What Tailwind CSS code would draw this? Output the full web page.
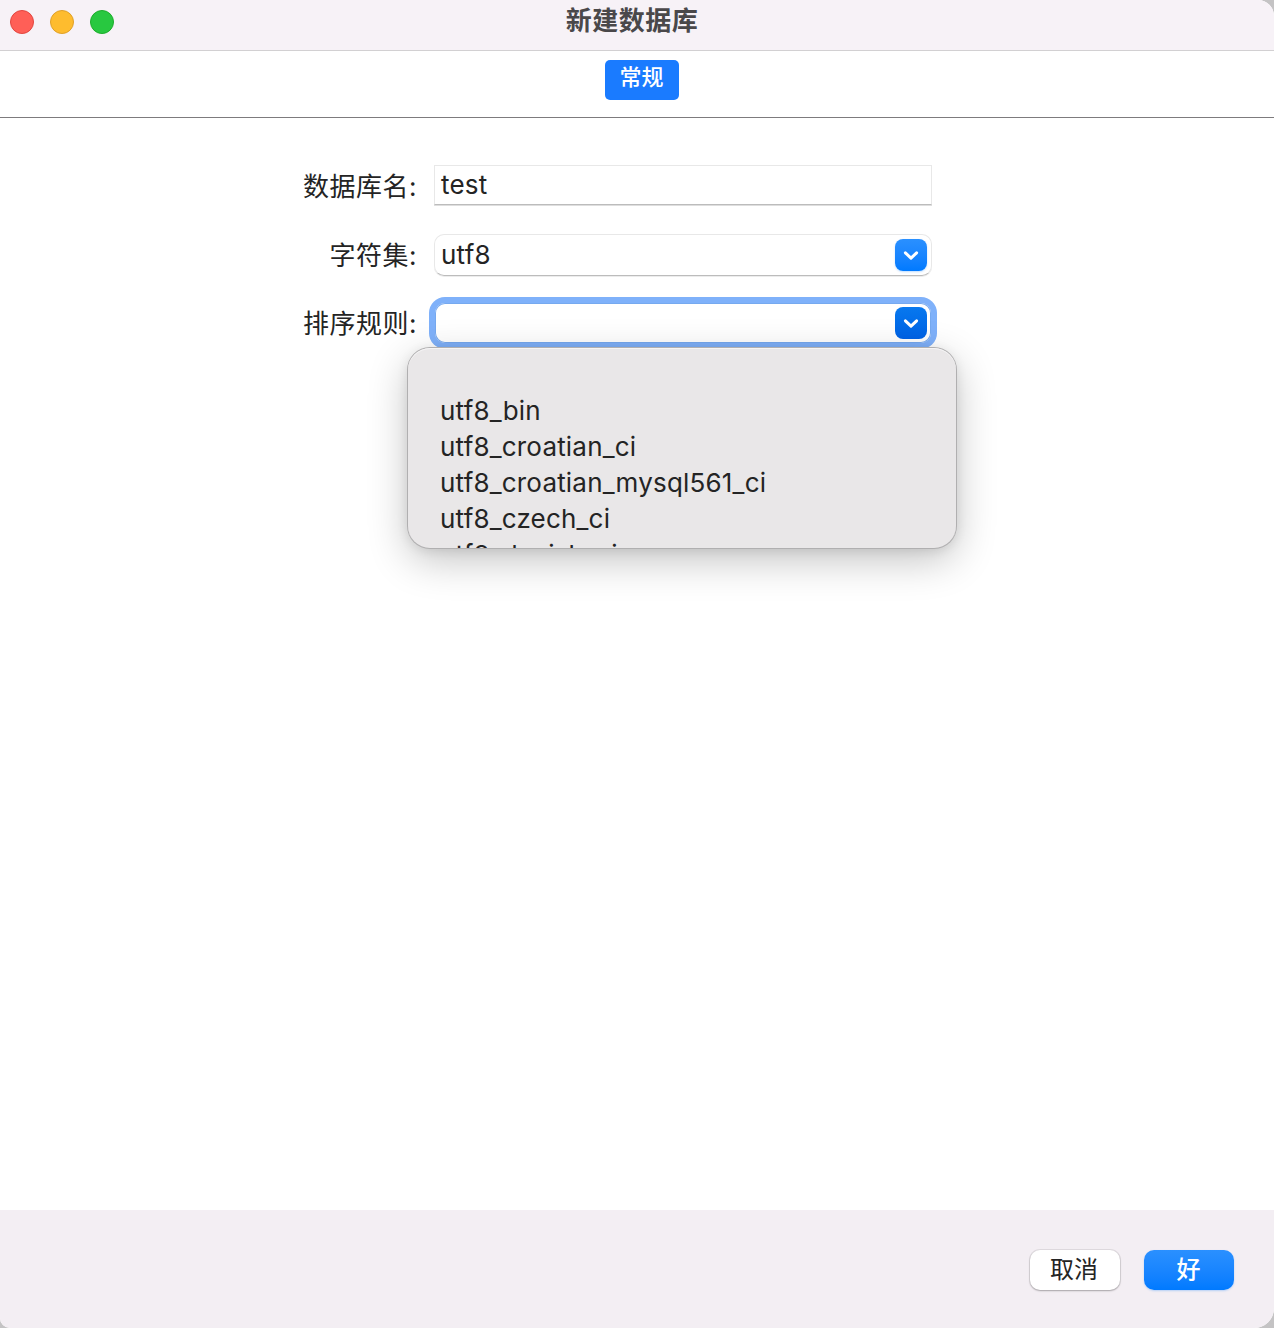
<!DOCTYPE html>
<html lang="zh-CN">
<head>
<meta charset="utf-8">
<title>新建数据库</title>
<script src="https://cdn.jsdelivr.net/npm/@tailwindcss/browser@4"></script>
</head>
<body class="h-[1328px] w-[1274px] overflow-hidden bg-[#c4c3c4] font-['Inter','Noto_Sans_CJK_SC',sans-serif] text-[#242424]">
<div class="flex h-full w-[1274px] flex-col overflow-hidden rounded-tr-[16px] rounded-br-[20px] rounded-bl-[10px] bg-white">
  <header class="grid h-[51px] shrink-0 grid-cols-[1fr_auto_1fr] border-b border-[#d2d0d2] bg-[#f7f2f7]">
    <div class="flex gap-4 pt-2.5 pl-2.5">
      <span class="size-6 rounded-full border border-[#e2463f] bg-[#ff5f57]"></span>
      <span class="size-6 rounded-full border border-[#e0a028] bg-[#febc2e]"></span>
      <span class="size-6 rounded-full border border-[#1dad2b] bg-[#28c840]"></span>
    </div>
    <h1 class="-ml-[10px] pt-[2px] text-[26px] leading-[38px] font-bold tracking-[0.5px] text-[#4a484a]">新建数据库</h1>
  </header>
  <nav class="flex h-[67px] shrink-0 justify-center border-b border-[#7d7b7d] pt-[9px] pl-[10px]">
    <button class="h-10 w-[74px] rounded-[5px] bg-[#1a7bff] pr-px pb-[6px] text-[22px] leading-[34px] font-medium text-white">常规</button>
  </nav>
  <main class="flex grow flex-col pt-[47px] pl-[217px]">
    <div class="flex h-[41px]">
      <label class="w-[200px] text-right text-[26px] leading-[44px] tracking-[0.5px]">数据库名:</label>
      <div class="ml-[17px] h-[40px] w-[498px] border border-[#e8e8e8] border-b-[#bcbcbc] pl-[6px] text-[26px] leading-[38px] tracking-[0.2px] shadow-[0_1px_0_#dedede]"><span>test</span></div>
    </div>
    <div class="mt-[28px] flex h-[42px]">
      <label class="w-[200px] text-right text-[26px] leading-[44px] tracking-[0.5px]">字符集:</label>
      <div class="ml-[17px] flex w-[498px] justify-between rounded-[10px] border border-[#e8e8e8] border-b-[#bcbcbc] pt-1 pr-1 pl-[6px] text-[26px] leading-[32px] tracking-[0.2px] shadow-[0_1px_0_#ececec]">
        <span>utf8</span>
        <span class="flex size-8 items-center justify-center rounded-[8px] bg-linear-to-b from-[#2a90ff] to-[#007aff] shadow-[0_1px_2px_#007aff40]">
          <svg class="size-4" viewBox="0 0 16 16" fill="none" stroke="white" stroke-width="3" stroke-linecap="round" stroke-linejoin="round"><path d="M2.4 5.8 8 11.2 13.6 5.8"/></svg>
        </span>
      </div>
    </div>
    <div class="mt-[27px] flex h-[40px]">
      <label class="w-[200px] text-right text-[26px] leading-[42px] tracking-[0.5px]">排序规则:</label>
      <div class="relative ml-[18px] h-[40px] w-[496px]">
        <div class="flex h-[40px] justify-end rounded-[10px] bg-white pt-1 pr-[4px] shadow-[inset_0_0_0_1px_#76a9ef,0_0_0_6px_#7fb1fa]">
          <span class="flex size-8 items-center justify-center rounded-[8px] bg-linear-to-b from-[#0878ee] to-[#0062e6] shadow-[0_0_0_2px_white]">
            <svg class="size-4" viewBox="0 0 16 16" fill="none" stroke="white" stroke-width="3" stroke-linecap="round" stroke-linejoin="round"><path d="M2.4 5.8 8 11.2 13.6 5.8"/></svg>
          </span>
        </div>
        <ul class="absolute top-[45px] -left-[27px] h-[200px] w-[548px] overflow-hidden rounded-[22px] bg-[#e9e7e8] pt-[45px] pl-[32px] text-[26px] leading-[36px] tracking-[0.19px] shadow-[inset_0_1px_0_#f5f4f5,0_0_0_1px_#b0afb0,0_12px_40px_#0000003d,0_2px_12px_#0000001a]">
          <li><span>utf8_bin</span></li>
          <li><span>utf8_croatian_ci</span></li>
          <li><span>utf8_croatian_mysql561_ci</span></li>
          <li><span>utf8_czech_ci</span></li>
          <li><span>utf8_danish_ci</span></li>
        </ul>
      </div>
    </div>
  </main>
  <footer class="flex h-[118px] shrink-0 justify-end gap-6 bg-[#f3eef3] pt-10 pr-10">
    <button class="h-10 w-[90px] rounded-[10px] bg-white pr-[2px] text-[24px] leading-[38px] shadow-[0_0_0_1px_#00000014,0_1px_2px_#00000040]">取消</button>
    <button class="h-10 w-[90px] rounded-[10px] bg-linear-to-b from-[#2a90ff] to-[#007aff] pr-px text-[24px] leading-[38px] font-medium text-white shadow-[0_1px_2px_#007aff40]">好</button>
  </footer>
</div>
</body>
</html>
